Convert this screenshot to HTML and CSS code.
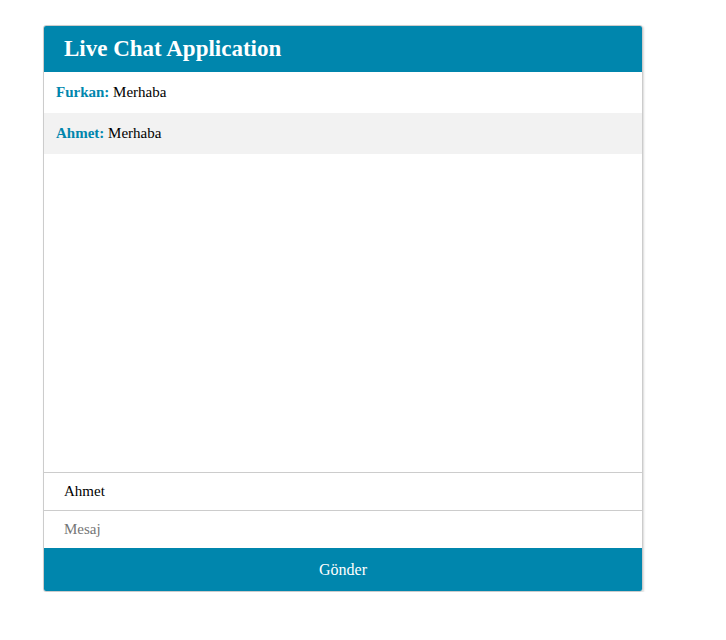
FILE: index.html
```html
<!DOCTYPE html>
<html>
<head>
<meta charset="utf-8">
<link rel="stylesheet" href="styles.css">
</head>
<body>
<div class="page">
  <div class="chat">
    <h2 class="title">Live Chat Application</h2>
    <div class="window">
      <div class="output">
        <p class="msg"><strong class="name">Furkan:</strong> Merhaba</p>
        <p class="msg alt"><strong class="name">Ahmet:</strong> Merhaba</p>
      </div>
    </div>
    <input class="field" type="text" value="Ahmet">
    <input class="field" type="text" placeholder="Mesaj">
    <button class="send">Gönder</button>
  </div>
</div>
</body>
</html>
```
FILE: styles.css
```css
html, body {
  margin: 0;
  padding: 0;
  background: #fff;
  font-family: "Liberation Serif", "Times New Roman", serif;
}
.page {
  padding: 25px 0 0 43px;
}
.chat {
  width: 600px;
  box-sizing: border-box;
  border: 1px solid #ccc;
  border-radius: 3px;
  box-shadow: 1px 1px 2px rgba(0, 0, 0, 0.15);
  overflow: hidden;
}
.title {
  margin: 0;
  background: #0086ad;
  color: #fff;
  font-size: 23px;
  font-weight: bold;
  padding: 10px 20px;
  line-height: 26px;
}
.window {
  height: 400px;
  border-bottom: 1px solid #ccc;
}
.msg {
  margin: 0;
  padding: 12px 12px;
  font-size: 15px;
  line-height: 17px;
  color: #000;
}
.msg.alt {
  background: #f2f2f2;
}
.name {
  color: #0086ad;
}
.field {
  display: block;
  width: 100%;
  box-sizing: border-box;
  border: 0;
  border-bottom: 1px solid #ccc;
  padding: 10px 20px;
  font-family: "Liberation Serif", "Times New Roman", serif;
  font-size: 15px;
  line-height: 17px;
  height: 38px;
  color: #000;
  outline: none;
  background: #fff;
}
.field:last-of-type {
  border-bottom: 0;
  height: 37px;
}
.field::placeholder {
  color: #757575;
}
.send {
  display: block;
  width: 100%;
  border: 0;
  background: #0086ad;
  color: #fff;
  font-family: "Liberation Serif", "Times New Roman", serif;
  font-size: 16px;
  line-height: 18px;
  padding: 12px 0;
  height: 43px;
}
```
